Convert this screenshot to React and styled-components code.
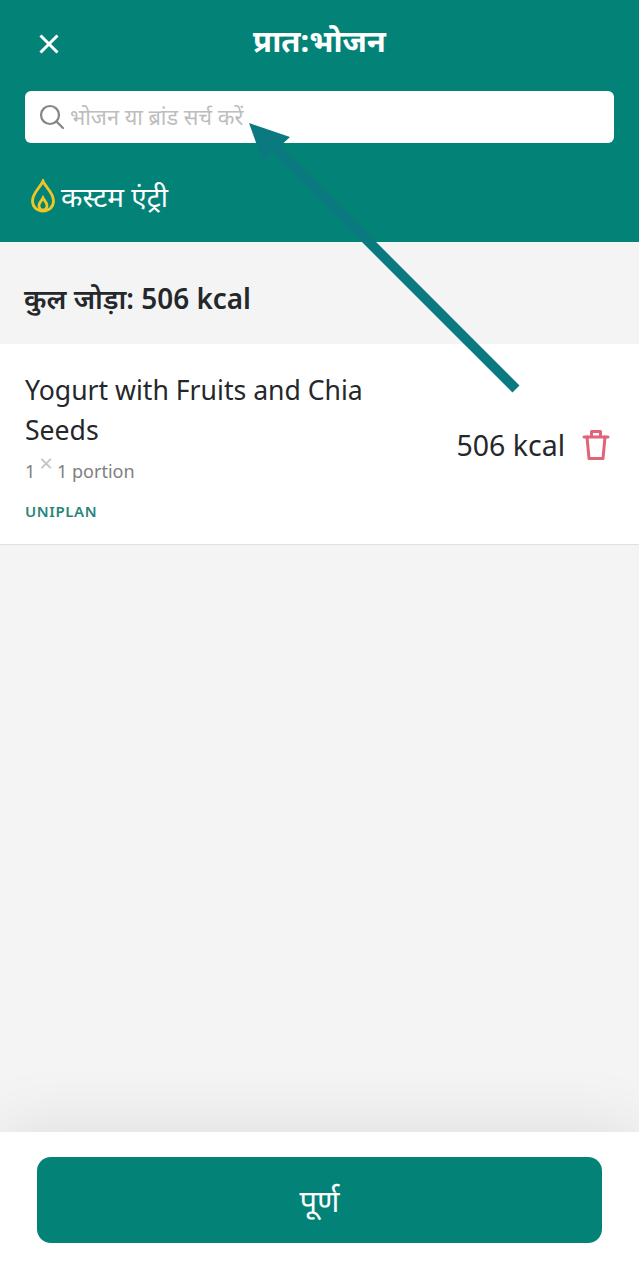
import React from 'react';
import styled, { createGlobalStyle } from 'styled-components';

const GlobalStyle = createGlobalStyle`
  html, body {
    margin: 0;
    padding: 0;
    background: #f4f4f4;
  }
  * {
    box-sizing: border-box;
  }
`;

const FONT = `"Noto Sans", "Open Sans", "Liberation Sans", sans-serif`;

const App = () => (
  <Screen>
    <GlobalStyle />
    <Header>
      <TitleBar>
        <CloseButton aria-label="close">
          <svg width="22" height="22" viewBox="0 0 22 22" fill="none" stroke="#fff" strokeWidth="3">
            <path d="M2.5 2.5 L19.5 19.5 M19.5 2.5 L2.5 19.5" />
          </svg>
        </CloseButton>
        <Title>प्रात:भोजन</Title>
      </TitleBar>
      <SearchBox>
        <svg width="26" height="26" viewBox="0 0 26 26" fill="none" stroke="#858585" strokeWidth="2.2" strokeLinecap="round">
          <circle cx="11" cy="11" r="9" />
          <path d="M17.5 17.5 L24 24" />
        </svg>
        <SearchInput placeholder="भोजन या ब्रांड सर्च करें" />
      </SearchBox>
      <CustomEntry>
        <svg width="26" height="34" viewBox="0 0 26 34" fill="none" stroke="#eec626" strokeWidth="2.8">
          <path d="M13 2 C15 8 23.5 13 23.5 22 C23.5 28 19 32 13 32 C7 32 2.5 28 2.5 22 C2.5 13 11 8 13 2 Z" />
          <path d="M13 19 C14.5 22 17 23.5 17 26.5 C17 29 15.5 31 13 31 C10.5 31 9 29 9 26.5 C9 23.5 11.5 22 13 19 Z" />
        </svg>
        कस्टम एंट्री
      </CustomEntry>
    </Header>

    <TotalRow>कुल जोड़ा: 506 kcal</TotalRow>

    <FoodItem>
      <FoodInfo>
        <FoodName>Yogurt with Fruits and Chia Seeds</FoodName>
        <Portion>
          1<Times>×</Times>1 portion
        </Portion>
        <Source>UNIPLAN</Source>
      </FoodInfo>
      <FoodRight>
        <Kcal>506 kcal</Kcal>
        <svg width="28" height="32" viewBox="0 0 28 32" fill="none" stroke="#e0647a" strokeWidth="3" strokeLinejoin="round" strokeLinecap="round">
          <path d="M2 8 H26" />
          <path d="M9.5 7 V2.5 H18.5 V7" />
          <path d="M5 8 L7 29.5 H21 L23 8" />
        </svg>
      </FoodRight>
    </FoodItem>

    <Filler />

    <Footer>
      <DoneButton>पूर्ण</DoneButton>
    </Footer>

    <Arrow width="639" height="420" viewBox="0 0 639 420">
      <path d="M516 389 L262 135" stroke="#0a7a80" strokeWidth="10" />
      <path d="M249 123 L290 137 L263 162 Z" fill="#0a7a80" />
    </Arrow>
  </Screen>
);

export default App;

const Screen = styled.div`
  position: relative;
  width: 639px;
  height: 1280px;
  display: flex;
  flex-direction: column;
  overflow: hidden;
  background: #f4f4f4;
  font-family: ${FONT};
  color: #25282b;
`;

const Header = styled.header`
  height: 242px;
  padding: 0 25px;
  background: #038377;
  color: #fff;
`;

const TitleBar = styled.div`
  position: relative;
  height: 91px;
  display: flex;
  align-items: flex-start;
  justify-content: center;
`;

const CloseButton = styled.div`
  position: absolute;
  left: 13px;
  top: 33px;
  width: 22px;
  height: 22px;
  display: flex;
`;

const Title = styled.h1`
  margin: 18px 0 0;
  font-size: 31px;
  line-height: 44px;
  font-weight: 700;
`;

const SearchBox = styled.div`
  height: 52px;
  padding: 0 14px;
  display: flex;
  align-items: center;
  gap: 5px;
  background: #fff;
  border-radius: 6px;
`;

const SearchInput = styled.input`
  flex: 1;
  border: none;
  outline: none;
  padding: 0 0 2px;
  background: transparent;
  font-family: ${FONT};
  font-size: 21.7px;

  &::placeholder {
    color: #bdbdbd;
    opacity: 1;
  }
`;

const CustomEntry = styled.div`
  margin-top: 36px;
  padding-left: 5px;
  display: flex;
  align-items: center;
  gap: 5px;
  font-size: 27.9px;
  line-height: 34px;
`;

const TotalRow = styled.div`
  height: 102px;
  padding: 10px 24px 0;
  display: flex;
  align-items: center;
  font-size: 27.9px;
  font-weight: 600;
`;

const FoodItem = styled.section`
  height: 201px;
  padding: 26px 25px 0;
  display: flex;
  justify-content: space-between;
  background: #fff;
  border-bottom: 1px solid #e0e0e0;
`;

const FoodInfo = styled.div`
  width: 385px;
`;

const FoodName = styled.div`
  font-size: 26.6px;
  line-height: 40px;
`;

const Portion = styled.div`
  margin-top: 7px;
  font-size: 18px;
  line-height: 24px;
  color: #808080;
`;

const Times = styled.span`
  position: relative;
  top: -6px;
  margin: 0 4px;
  font-size: 24px;
  line-height: 1;
  color: #c4c4c4;
`;

const Source = styled.div`
  margin-top: 18px;
  font-size: 15px;
  line-height: 20px;
  font-weight: 600;
  letter-spacing: 0.6px;
  color: #2a8579;
`;

const FoodRight = styled.div`
  height: 150px;
  margin-right: 4px;
  display: flex;
  align-items: center;
  gap: 17px;
`;

const Kcal = styled.div`
  font-size: 28.5px;
  line-height: 36px;
`;

const Filler = styled.div`
  flex: 1;
`;

const Footer = styled.footer`
  position: relative;
  height: 148px;
  padding: 25px 37px 0;
  background: #fff;
  box-shadow: 0 0 70px rgba(0, 0, 0, 0.1);
`;

const DoneButton = styled.button`
  width: 100%;
  height: 86px;
  border: none;
  border-radius: 14px;
  background: #038377;
  color: #fff;
  font-family: ${FONT};
  font-size: 31px;
  padding-bottom: 2px;
`;

const Arrow = styled.svg`
  position: absolute;
  left: 0;
  top: 0;
  pointer-events: none;
`;
